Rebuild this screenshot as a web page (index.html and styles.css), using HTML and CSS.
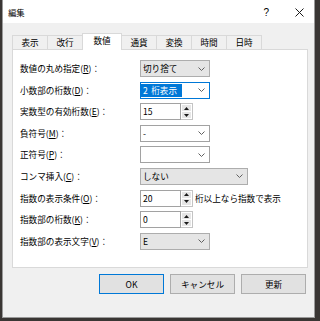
FILE: index.html
```html
<!DOCTYPE html>
<html lang="ja">
<head>
<meta charset="utf-8">
<link rel="stylesheet" href="styles.css">
</head>
<body>
<div class="window">
  <div class="titlebar">
    <span class="title">編集</span>
    <span class="help">?</span>
    <svg class="close" width="9" height="9" viewBox="0 0 9 9"><path d="M0.5 0.5L8.5 8.5M8.5 0.5L0.5 8.5" stroke="#1a1a1a" stroke-width="1" fill="none"/></svg>
  </div>
  <div class="body">
    <div class="tabs">
      <div class="tab">表示</div>
      <div class="tab">改行</div>
      <div class="tab active">数値</div>
      <div class="tab">通貨</div>
      <div class="tab">変換</div>
      <div class="tab">時間</div>
      <div class="tab">日時</div>
    </div>
    <div class="panel">
      <div class="form">
        <div class="lbl">数値の丸め指定(<u>R</u>)：</div>
        <div class="ctl">
          <div class="combo ro"><span>切り捨て</span><svg class="arrow" width="7" height="4" viewBox="0 0 7 4"><polyline points="0.5,0.5 3.5,3.5 6.5,0.5"/></svg></div>
        </div>

        <div class="lbl">小数部の桁数(<u>D</u>)：</div>
        <div class="ctl">
          <div class="combo edit focus"><span class="sel">2 桁表示</span><svg class="arrow" width="7" height="4" viewBox="0 0 7 4"><polyline points="0.5,0.5 3.5,3.5 6.5,0.5"/></svg></div>
        </div>

        <div class="lbl">実数型の有効桁数(<u>E</u>)：</div>
        <div class="ctl">
          <div class="spin">
            <div class="spin-edit">15</div>
            <div class="spin-btns">
              <div class="sb"><svg width="5" height="3" viewBox="0 0 5 3"><polygon points="0,3 2.5,0 5,3"/></svg></div>
              <div class="sb"><svg width="5" height="3" viewBox="0 0 5 3"><polygon points="0,0 2.5,3 5,0"/></svg></div>
            </div>
          </div>
        </div>

        <div class="lbl">負符号(<u>M</u>)：</div>
        <div class="ctl">
          <div class="combo edit"><span>-</span><svg class="arrow" width="7" height="4" viewBox="0 0 7 4"><polyline points="0.5,0.5 3.5,3.5 6.5,0.5"/></svg></div>
        </div>

        <div class="lbl">正符号(<u>P</u>)：</div>
        <div class="ctl">
          <div class="combo edit"><span></span><svg class="arrow" width="7" height="4" viewBox="0 0 7 4"><polyline points="0.5,0.5 3.5,3.5 6.5,0.5"/></svg></div>
        </div>

        <div class="lbl">コンマ挿入(<u>C</u>)：</div>
        <div class="ctl">
          <div class="combo ro wide"><span>しない</span><svg class="arrow" width="7" height="4" viewBox="0 0 7 4"><polyline points="0.5,0.5 3.5,3.5 6.5,0.5"/></svg></div>
        </div>

        <div class="lbl">指数の表示条件(<u>O</u>)：</div>
        <div class="ctl">
          <div class="spin">
            <div class="spin-edit">20</div>
            <div class="spin-btns">
              <div class="sb"><svg width="5" height="3" viewBox="0 0 5 3"><polygon points="0,3 2.5,0 5,3"/></svg></div>
              <div class="sb"><svg width="5" height="3" viewBox="0 0 5 3"><polygon points="0,0 2.5,3 5,0"/></svg></div>
            </div>
          </div>
          <span class="after">桁以上なら指数で表示</span>
        </div>

        <div class="lbl">指数部の桁数(<u>K</u>)：</div>
        <div class="ctl">
          <div class="spin">
            <div class="spin-edit">0</div>
            <div class="spin-btns">
              <div class="sb"><svg width="5" height="3" viewBox="0 0 5 3"><polygon points="0,3 2.5,0 5,3"/></svg></div>
              <div class="sb"><svg width="5" height="3" viewBox="0 0 5 3"><polygon points="0,0 2.5,3 5,0"/></svg></div>
            </div>
          </div>
        </div>

        <div class="lbl">指数部の表示文字(<u>V</u>)：</div>
        <div class="ctl">
          <div class="combo ro"><span>E</span><svg class="arrow" width="7" height="4" viewBox="0 0 7 4"><polyline points="0.5,0.5 3.5,3.5 6.5,0.5"/></svg></div>
        </div>
      </div>
    </div>
    <div class="buttons">
      <div class="btn default">OK</div>
      <div class="btn">キャンセル</div>
      <div class="btn">更新</div>
    </div>
  </div>
</div>
</body>
</html>
```

FILE: styles.css
```css
html, body {
  margin: 0;
  padding: 0;
}
body {
  background: #3a3634;
  width: 317px;
  height: 321px;
  overflow: hidden;
  font-family: "Noto Sans CJK JP", "Noto Sans", sans-serif;
  font-size: 8.6px;
  color: #000;
}
.window {
  margin-left: 2px;
  width: 313px;
  height: 318px;
  box-sizing: border-box;
  border: 1px solid #9a9a9a;
  border-top: 0;
  background: #f0f0f0;
  display: flex;
  flex-direction: column;
}
.titlebar {
  height: 23px;
  flex: none;
  background: #fff;
  display: flex;
  align-items: center;
  padding: 0 10px 0 5px;
}
.title {
  flex: 1;
  font-size: 8.4px;
  line-height: 12px;
  padding-top: 1px;
}
.help {
  font-family: "Liberation Sans", sans-serif;
  font-size: 10px;
  margin-right: 26px;
  padding-top: 1px;
}
.close {
  display: block;
  margin-top: 1px;
}
.body {
  flex: 1;
  display: flex;
  flex-direction: column;
  padding-top: 10px;
}
.tabs {
  display: flex;
  align-items: flex-end;
  height: 16px;
  margin-left: 9px;
}
.tab {
  width: 36px;
  height: 14px;
  box-sizing: border-box;
  border: 1px solid #d9d9d9;
  border-bottom: 0;
  background: #f0f0f0;
  text-align: center;
  line-height: 13px;
  margin-left: -1px;
}
.tab:first-child {
  margin-left: 0;
}
.tab.active {
  width: 40px;
  height: 17px;
  margin-bottom: -1px;
  background: #fff;
  position: relative;
  z-index: 1;
  line-height: 13px;
}
.panel {
  height: 219px;
  box-sizing: border-box;
  margin: 0 6px 0 9px;
  border: 1px solid #d9d9d9;
  background: #fff;
  padding: 10px 0 0 7px;
}
.form {
  display: grid;
  grid-template-columns: 120px auto;
  grid-auto-rows: 17px;
  row-gap: 4.6px;
  align-items: center;
}
.lbl {
  line-height: 17px;
  white-space: nowrap;
}
.lbl u {
  text-decoration-thickness: 1px;
  text-underline-offset: 1px;
}
.ctl {
  display: flex;
  align-items: center;
  height: 17px;
}
.combo {
  width: 70px;
  height: 17px;
  box-sizing: border-box;
  border: 1px solid #adadad;
  display: flex;
  align-items: center;
  justify-content: space-between;
  padding: 0 4px 0 2px;
  line-height: 15px;
}
.combo.ro {
  background: #e5e5e5;
}
.combo.edit {
  background: #fff;
  border-color: #a2a2a2;
}
.combo.focus {
  border-color: #0078d7;
  padding-left: 0;
}
.combo.wide {
  width: 108px;
}
.sel {
  background: #0078d7;
  color: #fff;
  padding: 0 5px 0 2px;
  line-height: 13px;
  word-spacing: 1.5px;
}
.arrow {
  display: block;
  flex: none;
}
.arrow polyline {
  fill: none;
  stroke: #606060;
  stroke-width: 1;
}
.spin {
  display: flex;
  height: 17px;
}
.spin-edit {
  width: 41px;
  box-sizing: border-box;
  border: 1px solid #a2a2a2;
  background: #fff;
  padding-left: 2px;
  line-height: 15px;
}
.spin-btns {
  width: 12px;
  box-sizing: border-box;
  border: 1px solid #c4c4c4;
  border-left: 0;
  display: flex;
  flex-direction: column;
  background: #fff;
}
.sb {
  flex: 1;
  display: flex;
  align-items: center;
  justify-content: center;
  background: #e6e6e6;
  border: 1px solid #fff;
}
.sb + .sb {
  border-top: 0;
}
.sb svg {
  display: block;
}
.sb polygon {
  fill: #1a1a1a;
}
.after {
  margin-left: 2px;
  white-space: nowrap;
}
.buttons {
  display: flex;
  justify-content: flex-end;
  gap: 6px;
  margin-top: 6px;
  padding-right: 8px;
}
.btn {
  width: 65px;
  height: 20px;
  box-sizing: border-box;
  border: 1px solid #adadad;
  background: #e1e1e1;
  text-align: center;
  line-height: 18px;
}
.btn.default {
  border-color: #0078d7;
}
```
